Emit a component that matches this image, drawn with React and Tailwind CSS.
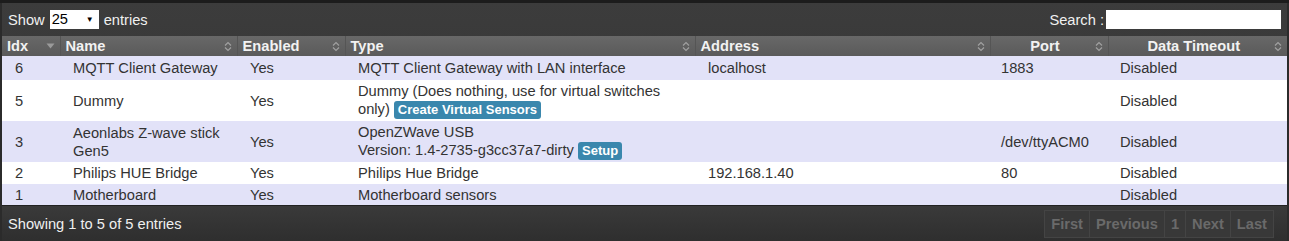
import React from "react";

const rows = [
  { idx: "6", name: "MQTT Client Gateway", enabled: "Yes", type: "MQTT Client Gateway with LAN interface", address: "localhost", port: "1883", timeout: "Disabled", py: "py-[3px]" },
  { idx: "5", name: "Dummy", enabled: "Yes", type: "dummy", address: "", port: "", timeout: "Disabled", py: "py-[2px]" },
  { idx: "3", name: "Aeonlabs Z-wave stick Gen5", enabled: "Yes", type: "zwave", address: "", port: "/dev/ttyACM0", timeout: "Disabled", py: "py-[2px]" },
  { idx: "2", name: "Philips HUE Bridge", enabled: "Yes", type: "Philips Hue Bridge", address: "192.168.1.40", port: "80", timeout: "Disabled", py: "py-[2px]" },
  { idx: "1", name: "Motherboard", enabled: "Yes", type: "Motherboard sensors", address: "", port: "", timeout: "Disabled", py: "py-[1.5px]" },
];

function SortBoth() {
  return (
    <svg width="8" height="11" viewBox="0 0 8 11" className="shrink-0">
      <path d="M1 4.5 L4 1.5 L7 4.5" fill="none" stroke="#a0a0a0" strokeWidth="1.2" />
      <path d="M1 6.5 L4 9.5 L7 6.5" fill="none" stroke="#a0a0a0" strokeWidth="1.2" />
    </svg>
  );
}

function SortDesc() {
  return (
    <svg width="9" height="6" viewBox="0 0 9 6" className="shrink-0">
      <path d="M0.5 0.5 L8.5 0.5 L4.5 5.5 Z" fill="#9a9a9a" />
    </svg>
  );
}

function Btn({ children }) {
  return (
    <span className="inline-block rounded-[3px] bg-[#3a87ad] px-[4px] text-[13px] leading-[18px] font-bold text-white align-middle">
      {children}
    </span>
  );
}

function Th({ label, center, desc, border = true }) {
  return (
    <th className={`px-[5px] py-0 text-[14.67px] leading-[20px] font-bold text-[#f2f2f2] ${border ? "border-r border-[#555]" : ""}`}>
      <div className="flex items-center">
        <span className={center ? "flex-1 text-center" : "flex-1 text-left"}>{label}</span>
        {desc ? <SortDesc /> : <SortBoth />}
      </div>
    </th>
  );
}

function typeCell(r) {
  if (r.type === "dummy") {
    return (
      <>
        Dummy (Does nothing, use for virtual switches
        <br />
        only) <Btn>Create Virtual Sensors</Btn>
      </>
    );
  }
  if (r.type === "zwave") {
    return (
      <>
        OpenZWave USB
        <br />
        Version: 1.4-2735-g3cc37a7-dirty <Btn>Setup</Btn>
      </>
    );
  }
  return r.type;
}

export default function App() {
  return (
    <div className="w-[1289px] h-[241px] bg-[#2b2b2b] font-['Liberation_Sans',Arial,sans-serif] overflow-hidden">
      <div className="h-[3px] bg-[#1c1c1c]"></div>
      <div className="mx-[2px] bg-gradient-to-b from-[#3c3c3c] to-[#303030]">
        <div className="flex items-center justify-between h-[33px] pl-[6px] pr-[6px] text-[14.67px] text-[#f0f0f0]">
          <div className="flex items-center gap-[5px]">
            <span>Show</span>
            <div className="flex items-center justify-between w-[49px] h-[19px] bg-white text-black px-[2px]">
              <span className="leading-none">25</span>
              <span className="text-[8px] mr-[3px]">▼</span>
            </div>
            <span>entries</span>
          </div>
          <div className="flex items-center gap-[2px]">
            <span>Search :</span>
            <div className="w-[175px] h-[19px] bg-white"></div>
          </div>
        </div>
        <table className="w-full table-fixed border-collapse">
          <colgroup>
            <col className="w-[58px]" />
            <col className="w-[177px]" />
            <col className="w-[108px]" />
            <col className="w-[350px]" />
            <col className="w-[295px]" />
            <col className="w-[118px]" />
            <col />
          </colgroup>
          <thead>
            <tr className="h-[19px] bg-gradient-to-b from-[#686868] to-[#5a5a5a]">
              <Th label="Idx" desc />
              <Th label="Name" />
              <Th label="Enabled" />
              <Th label="Type" />
              <Th label="Address" />
              <Th label="Port" center />
              <Th label="Data Timeout" center border={false} />
            </tr>
          </thead>
          <tbody className="text-[14.67px] leading-[18px] text-[#333]">
            {rows.map((r, i) => (
              <tr key={r.idx} className={i % 2 === 0 ? "bg-[#e2e2f8]" : "bg-white"}>
                <td className={`${r.py} pl-[13px] pr-[4px]`}>{r.idx}</td>
                <td className={`${r.py} pl-[13px] pr-[4px]`}>{r.name}</td>
                <td className={`${r.py} pl-[13px] pr-[4px]`}>{r.enabled}</td>
                <td className={`${r.py} pl-[13px] pr-[4px]`}>{typeCell(r)}</td>
                <td className={`${r.py} pl-[13px] pr-[4px]`}>{r.address}</td>
                <td className={`${r.py} pl-[11px] pr-[4px]`}>{r.port}</td>
                <td className={`${r.py} pl-[12px] pr-[4px]`}>{r.timeout}</td>
              </tr>
            ))}
          </tbody>
        </table>
        <div className="flex items-center justify-between h-[37px] pl-[6px] bg-gradient-to-b from-[#3a3a3a] to-[#2e2e2e] border-t border-[#222]">
          <span className="text-[14.67px] text-[#f0f0f0]">Showing 1 to 5 of 5 entries</span>
          <div className="flex h-[28px] mr-[13px] text-[14.67px] font-bold text-[#6a6a6a]">
            {["First", "Previous", "1", "Next", "Last"].map((p) => (
              <span key={p} className="flex items-center px-[6px] bg-[#383838] border border-[#444] -ml-px">
                {p}
              </span>
            ))}
          </div>
        </div>
      </div>
    </div>
  );
}
